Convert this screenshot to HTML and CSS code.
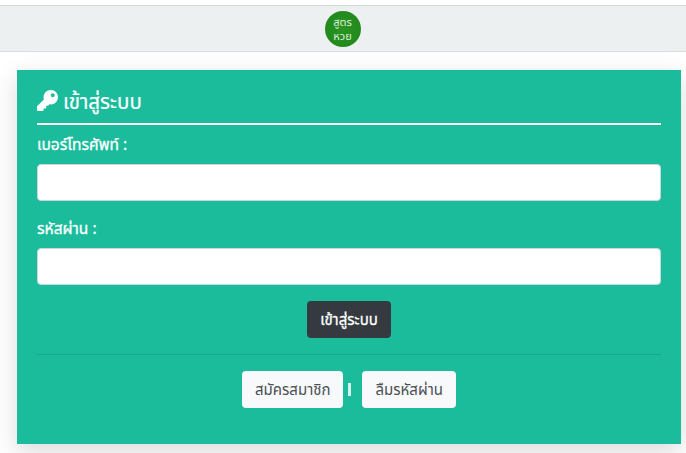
FILE: index.html
```html
<!DOCTYPE html>
<html lang="th">
<head>
    <meta charset="UTF-8">
    <meta name="viewport" content="width=device-width, initial-scale=1.0">
    <title>เข้าสู่ระบบ</title>
    <link rel="stylesheet" href="styles.css">
</head>
<body>
    <header class="topbar">
        <div class="logo">สูตร<br>หวย</div>
    </header>
    <main class="login-card">
        <h2 class="login-title">
            <svg class="key-icon" viewBox="0 0 512 512"><path fill="currentColor" d="M512 176.001C512 273.203 433.202 352 336 352c-11.22 0-22.19-1.062-32.827-3.069l-24.012 27.014A23.999 23.999 0 0 1 261.223 384H224v40c0 13.255-10.745 24-24 24h-40v40c0 13.255-10.745 24-24 24H24c-13.255 0-24-10.745-24-24v-78.059c0-6.365 2.529-12.47 7.029-16.971l161.802-161.802C163.108 213.814 160 195.271 160 176 160 78.798 238.797.001 335.999 0 433.488-.001 512 78.511 512 176.001zM336 128c0 26.51 21.49 48 48 48s48-21.49 48-48-21.49-48-48-48-48 21.49-48 48z"/></svg>
            เข้าสู่ระบบ
        </h2>
        <form class="login-form">
            <label class="field-label" for="phone">เบอร์โทรศัพท์ :</label>
            <input class="field-input" type="text" id="phone">
            <label class="field-label" for="password">รหัสผ่าน :</label>
            <input class="field-input" type="password" id="password">
            <div class="submit-row">
                <button class="btn btn-dark" type="button">เข้าสู่ระบบ</button>
            </div>
        </form>
        <div class="login-links">
            <a class="btn btn-light" href="#">สมัครสมาชิก</a>
            <span class="link-sep"></span>
            <a class="btn btn-light" href="#">ลืมรหัสผ่าน</a>
        </div>
    </main>
</body>
</html>
```

FILE: styles.css
```css
* {
    box-sizing: border-box;
}
html, body {
    height: 453px;
    overflow: hidden;
}
body {
    margin: 0;
    padding-top: 5px;
    background-color: #fff;
    color: #fff;
    font-family: "Noto Sans", "Noto Sans Thai", "Noto Sans CJK SC", sans-serif;
}
.topbar {
    display: flex;
    justify-content: center;
    align-items: center;
    height: 47px;
    background-color: #ecf0f1;
    border-top: 1px solid #d9dcdd;
    border-bottom: 1px solid #d9dcdd;
}
.logo {
    width: 36px;
    height: 36px;
    margin-right: 1px;
    padding-top: 4px;
    border-radius: 50%;
    background: radial-gradient(circle, #2a9423, #1f861a);
    color: #dff0dd;
    font-size: 11px;
    line-height: 14px;
    text-align: center;
}
.login-card {
    width: 664px;
    height: 374px;
    margin: 18px 0 0 17px;
    padding: 20px;
    background-color: #1abc9c;
    box-shadow: 0 8px 24px rgba(0, 0, 0, 0.15);
}
.login-title {
    display: flex;
    align-items: flex-start;
    gap: 5px;
    box-sizing: content-box;
    height: 33px;
    margin: 0;
    border-bottom: 2px solid #fff;
    font-size: 20.5px;
    line-height: 22px;
    font-weight: 400;
    -webkit-text-stroke: 0.2px #fff;
}
.key-icon {
    width: 21px;
    height: 21px;
}
.field-label {
    display: block;
    height: 39px;
    padding-top: 7px;
    font-size: 15.5px;
    line-height: 24px;
    -webkit-text-stroke: 0.3px #fff;
}
.field-input {
    display: block;
    width: 100%;
    height: 37px;
    margin-bottom: 8px;
    background-color: #fff;
    border: 1px solid #ced4da;
    border-radius: 4px;
}
.submit-row {
    display: flex;
    justify-content: center;
    padding-top: 8px;
    padding-bottom: 16px;
    border-bottom: 1px solid #17a88c;
}
.btn {
    display: inline-block;
    height: 37px;
    padding: 0 13px;
    border: 0;
    border-radius: 4px;
    font-family: inherit;
    font-size: 15px;
    line-height: 37px;
    text-decoration: none;
}
.btn-dark {
    background-color: #343a40;
    color: #fff;
    -webkit-text-stroke: 0.3px #fff;
}
.btn-light {
    background-color: #f8f9fa;
    color: #4b4f54;
}
.login-links {
    display: flex;
    justify-content: center;
    align-items: center;
    margin-top: 16px;
}
.link-sep {
    width: 3px;
    height: 13px;
    margin: 0 11px 0 5px;
    background-color: #d8f3ee;
}
```
